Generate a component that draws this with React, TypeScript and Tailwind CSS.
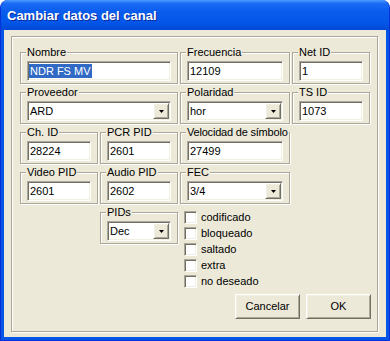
import React from 'react';

const sunken =
  'bg-white border border-t-[#ACA899] border-l-[#ACA899] border-r-white border-b-white shadow-[inset_1px_1px_0_#716F64,inset_-1px_-1px_0_#F1EFE2]';

const raised =
  'bg-[#ECE9D8] border border-t-white border-l-white border-r-[#716F64] border-b-[#716F64] shadow-[inset_1px_1px_0_#F1EFE2,inset_-1px_-1px_0_#ACA899]';

const Group: React.FC<{ label: string; className?: string; legendClass?: string; children: React.ReactNode }> = ({
  label,
  className = '',
  legendClass = '',
  children,
}) => (
  <fieldset
    className={`min-w-0 border border-[#ACA899] shadow-[1px_1px_0_#fff,inset_1px_1px_0_#fff] pl-[5px] pr-[6px] pt-[2px] pb-[2px] ${className}`}
  >
    <legend className={`px-[1px] leading-[13px] bg-[#ECE9D8] whitespace-nowrap ${legendClass}`}>{label}</legend>
    {children}
  </fieldset>
);

const Field: React.FC<{ value: string }> = ({ value }) => (
  <div className={`ml-[1px] h-[20px] flex items-center pl-[2px] leading-[14px] ${sunken}`}>{value}</div>
);

const Combo: React.FC<{ value: string }> = ({ value }) => (
  <div className={`ml-[1px] h-[20px] flex items-center justify-between pl-[2px] pr-[1px] leading-[14px] ${sunken}`}>
    <span>{value}</span>
    <div className={`w-[16px] h-[16px] flex items-center justify-center ${raised}`}>
      <svg width="5" height="3" viewBox="0 0 5 3">
        <path d="M0 0h5L2.5 3z" fill="#000" />
      </svg>
    </div>
  </div>
);

const Check: React.FC<{ label: string }> = ({ label }) => (
  <div className="h-[16px] flex items-start gap-[4px]">
    <div className={`w-[13px] h-[13px] ${sunken}`} />
    <span className="leading-[13px]">{label}</span>
  </div>
);

const App: React.FC = () => {
  return (
    <div className="w-[390px] h-[341px] bg-white font-['Liberation_Sans',Arial,sans-serif] text-[11px] text-black">
      <div className="h-full flex flex-col rounded-t-[8px] overflow-hidden bg-[#0556E6] border-x border-b border-[#0831D9]">
        <div className="h-[30px] shrink-0 flex items-center pl-[6px] pt-[2px] bg-[linear-gradient(to_bottom,#4A9BFF_0%,#1A6AF5_12%,#0A5CEC_40%,#0356E8_75%,#0349D6_100%)]">
          <span className="text-[13px] font-bold text-white [text-shadow:1px_1px_0_#0A2A9A]">Cambiar datos del canal</span>
        </div>
        <div className="flex-1 mx-[3px] mb-[3px] bg-[#ECE9D8] pt-[6px] pl-[7px]">
          <div className="w-[367px] h-[296px] border border-[#ACA899] shadow-[1px_1px_0_#fff,inset_1px_1px_0_#fff] pt-[9px] pl-[8px]">
            <div className="grid grid-cols-[78px_78px_110px_78px] gap-x-[2px] gap-y-[2px] items-start">
              <Group label="Nombre" className="col-span-2">
                <div className={`ml-[1px] h-[20px] flex items-center pl-[1px] ${sunken}`}>
                  <span className="bg-[#316AC5] text-white px-[1px] leading-[14px]">NDR FS MV</span>
                </div>
              </Group>
              <Group label="Frecuencia">
                <Field value="12109" />
              </Group>
              <Group label="Net ID">
                <Field value="1" />
              </Group>

              <Group label="Proveedor" className="col-span-2">
                <Combo value="ARD" />
              </Group>
              <Group label="Polaridad">
                <Combo value="hor" />
              </Group>
              <Group label="TS ID">
                <Field value="1073" />
              </Group>

              <Group label="Ch. ID">
                <Field value="28224" />
              </Group>
              <Group label="PCR PID">
                <Field value="2601" />
              </Group>
              <Group label="Velocidad de símbolo" legendClass="tracking-[-0.2px]">
                <Field value="27499" />
              </Group>
              <div />

              <Group label="Video PID">
                <Field value="2601" />
              </Group>
              <Group label="Audio PID">
                <Field value="2602" />
              </Group>
              <Group label="FEC">
                <Combo value="3/4" />
              </Group>
              <div />

              <Group label="PIDs" className="col-start-2">
                <Combo value="Dec" />
              </Group>
              <div className="col-span-2 pl-[4px] pt-[5px] pb-[1px]">
                <Check label="codificado" />
                <Check label="bloqueado" />
                <Check label="saltado" />
                <Check label="extra" />
                <Check label="no deseado" />
              </div>
            </div>

            <div className="mt-[2px] w-[351px] flex justify-end gap-[6px]">
              <button className={`w-[65px] h-[25px] text-[11px] ${raised}`}>Cancelar</button>
              <button className={`w-[65px] h-[25px] text-[11px] ${raised}`}>OK</button>
            </div>
          </div>
        </div>
      </div>
    </div>
  );
};

export default App;
